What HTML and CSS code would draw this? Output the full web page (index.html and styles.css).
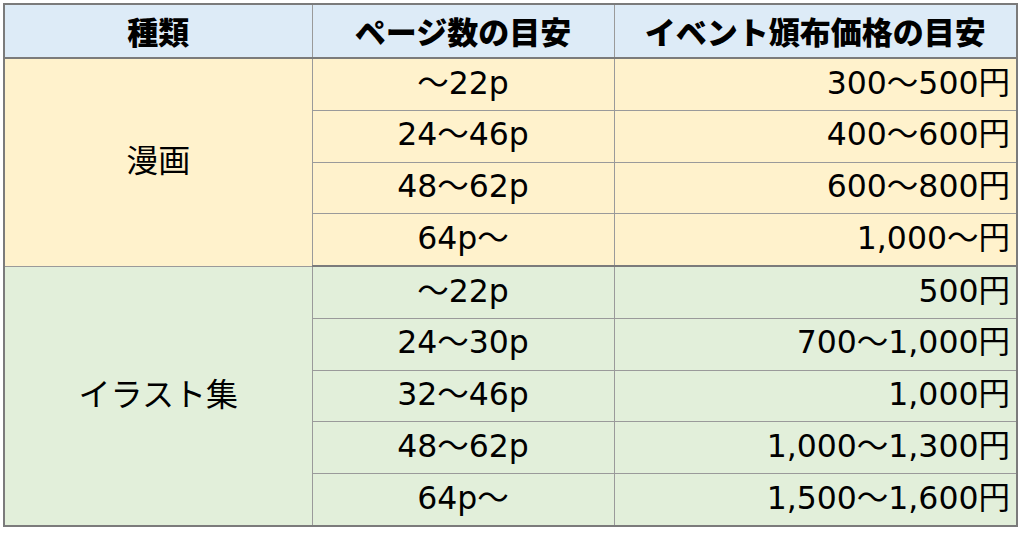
FILE: index.html
```html
<!DOCTYPE html>
<html lang="ja">
<head>
<meta charset="utf-8">
<link rel="stylesheet" href="styles.css">
</head>
<body>
<div class="wrap">
<table class="price">
  <colgroup>
    <col class="c1"><col class="c2"><col class="c3">
  </colgroup>
  <thead>
    <tr class="head">
      <th>種類</th>
      <th>ページ数の目安</th>
      <th>イベント頒布価格の目安</th>
    </tr>
  </thead>
  <tbody class="manga">
    <tr><td class="kind" rowspan="4">漫画</td><td class="pages">～22p</td><td class="yen">300～500円</td></tr>
    <tr><td class="pages">24～46p</td><td class="yen">400～600円</td></tr>
    <tr><td class="pages">48～62p</td><td class="yen">600～800円</td></tr>
    <tr><td class="pages">64p～</td><td class="yen">1,000～円</td></tr>
  </tbody>
  <tbody class="illust">
    <tr><td class="kind" rowspan="5">イラスト集</td><td class="pages">～22p</td><td class="yen">500円</td></tr>
    <tr><td class="pages">24～30p</td><td class="yen">700～1,000円</td></tr>
    <tr><td class="pages">32～46p</td><td class="yen">1,000円</td></tr>
    <tr><td class="pages">48～62p</td><td class="yen">1,000～1,300円</td></tr>
    <tr><td class="pages">64p～</td><td class="yen">1,500～1,600円</td></tr>
  </tbody>
</table>
</div>
</body>
</html>
```

FILE: styles.css
```css
html, body {
  margin: 0;
  padding: 0;
  background: #ffffff;
}
.wrap {
  padding: 3px 0 0 3px;
}
.price {
  border-collapse: collapse;
  table-layout: fixed;
  width: 1013px;
  font-family: "DejaVu Sans", "Noto Sans CJK JP", sans-serif;
  font-size: 31.5px;
  color: #000000;
  border: 2px solid #7b7b7b;
}
.c1 { width: 308px; }
.c2 { width: 302px; }
.c3 { width: 403px; }
.price th, .price td {
  border: 1px solid #9a9a9a;
  padding: 0 6px;
  line-height: 1;
  white-space: nowrap;
}
.head th {
  height: 50px;
  background: #ddebf7;
  font-family: "Noto Sans CJK JP", sans-serif;
  font-weight: 900;
  font-size: 31px;
  text-align: center;
  border-bottom: 2px solid #7b7b7b;
  padding-bottom: 2px;
}
.price td {
  height: 48.75px;
  padding-bottom: 2px;
}
.manga td { background: #fff2cc; }
.illust td { background: #e2efda; }
.manga tr:last-child td { border-bottom: 2px solid #7b7b7b; }
.price td.kind {
  text-align: center;
  font-family: "Noto Sans CJK JP", sans-serif;
  font-size: 32px;
  padding-bottom: 8px;
}
.pages { text-align: center; }
.yen { text-align: right; }
```
